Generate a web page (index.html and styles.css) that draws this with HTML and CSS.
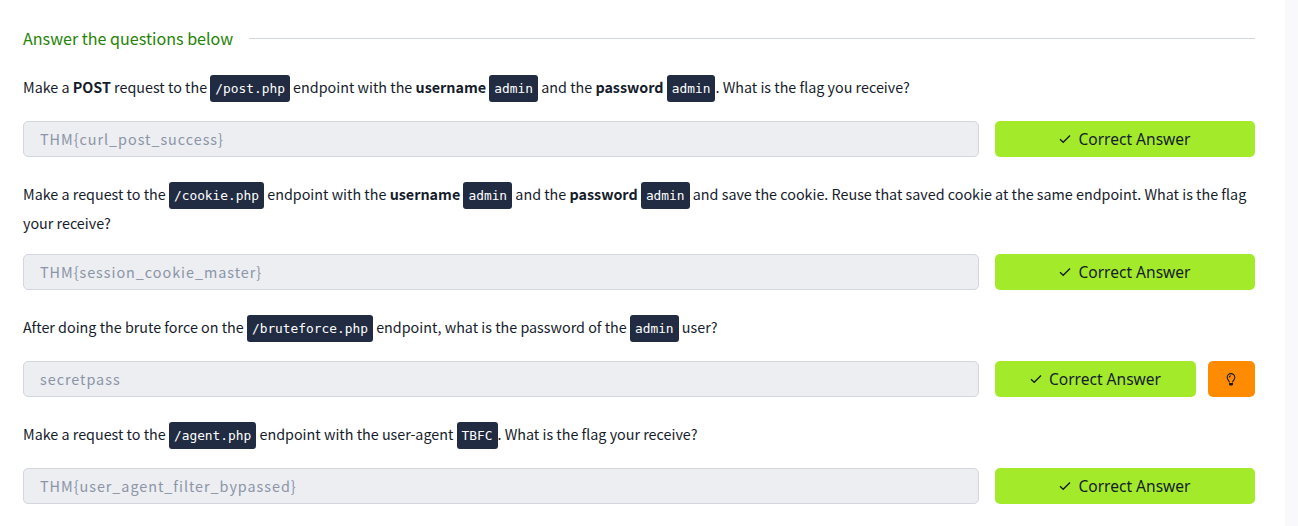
FILE: index.html
```html
<!DOCTYPE html>
<html lang="en">
<head>
  <meta charset="UTF-8">
  <meta name="viewport" content="width=device-width, initial-scale=1.0">
  <title>Answer the questions below</title>
  <link rel="stylesheet" href="styles.css">
</head>
<body>
  <svg class="sprite" aria-hidden="true">
    <symbol id="check" viewBox="0 0 12 10">
      <path d="M1 5.2 4.2 8.3 11 1.5" fill="none" stroke="currentColor" stroke-width="1.3"/>
    </symbol>
    <symbol id="bulb" viewBox="0 0 10 13">
      <path d="M3.5 9.4C3.3 7.6 1.2 6.8 1.2 4.4a3.8 3.8 0 0 1 7.6 0C8.8 6.8 6.7 7.6 6.5 9.4M3.2 4.5A1.9 1.9 0 0 1 5 2.7" fill="none" stroke="currentColor" stroke-width="1.1"/>
      <path d="M3 10h4v1.2L6.3 12.5H3.7L3 11.2z" fill="currentColor"/>
    </symbol>
  </svg>

  <main class="task">
    <div class="task-title">
      <h2>Answer the questions below</h2>
      <span class="line"></span>
    </div>

    <section class="question">
      <p>Make a <strong>POST</strong> request to the <code>/post.php</code> endpoint with the <strong>username</strong> <code>admin</code> and the <strong>password</strong> <code>admin</code>. What is the flag you receive?</p>
      <div class="answer-row">
        <input class="answer" type="text" value="THM{curl_post_success}" disabled>
        <div class="actions">
          <button class="btn correct"><svg class="icon-check"><use href="#check"/></svg><span>Correct Answer</span></button>
        </div>
      </div>
    </section>

    <section class="question">
      <p>Make a request to the <code>/cookie.php</code> endpoint with the <strong>username</strong> <code>admin</code> and the <strong>password</strong> <code>admin</code> and save the cookie. Reuse that saved cookie at the same endpoint. What is the flag your receive?</p>
      <div class="answer-row">
        <input class="answer" type="text" value="THM{session_cookie_master}" disabled>
        <div class="actions">
          <button class="btn correct"><svg class="icon-check"><use href="#check"/></svg><span>Correct Answer</span></button>
        </div>
      </div>
    </section>

    <section class="question">
      <p>After doing the brute force on the <code>/bruteforce.php</code> endpoint, what is the password of the <code>admin</code> user?</p>
      <div class="answer-row">
        <input class="answer" type="text" value="secretpass" disabled>
        <div class="actions">
          <button class="btn correct"><svg class="icon-check"><use href="#check"/></svg><span>Correct Answer</span></button>
          <button class="btn hint" aria-label="Hint"><svg class="icon-bulb"><use href="#bulb"/></svg></button>
        </div>
      </div>
    </section>

    <section class="question">
      <p>Make a request to the <code>/agent.php</code> endpoint with the user-agent <code>TBFC</code>. What is the flag your receive?</p>
      <div class="answer-row">
        <input class="answer" type="text" value="THM{user_agent_filter_bypassed}" disabled>
        <div class="actions">
          <button class="btn correct"><svg class="icon-check"><use href="#check"/></svg><span>Correct Answer</span></button>
        </div>
      </div>
    </section>
  </main>
</body>
</html>
```
FILE: styles.css
```css
:root {
  --text: #151c2b;
  --code-bg: #212c42;
  --border: #d2d6df;
  --green: #a3ea2a;
  --orange: #ff8b00;
  --sans: "Noto Sans CJK JP", "Open Sans", sans-serif;
}

* {
  box-sizing: border-box;
}

body {
  margin: 0;
  background: #f9f9fb;
  color: var(--text);
  font-family: var(--sans);
  overflow: hidden;
}

.sprite {
  display: none;
}

.task {
  width: 1285px;
  height: 526px;
  padding: 25px 30px 0 23px;
  background: #fff;
}

.task-title {
  display: flex;
  align-items: center;
  gap: 16px;
  height: 26px;
}

.task-title h2 {
  margin: 0;
  font-size: 16.1px;
  font-weight: 400;
  line-height: 26px;
  color: #258305;
}

.task-title .line {
  flex: 1;
  height: 1px;
  background: var(--border);
}

.question {
  padding-top: 23px;
}

.question + .question {
  padding-top: 24px;
}

.question p {
  margin: 0 0 18px;
  font-size: 14.33px;
  line-height: 26px;
}

.question code {
  display: inline-block;
  height: 27px;
  margin-bottom: 1px;
  padding: 0 5px;
  border-radius: 3px;
  background: var(--code-bg);
  color: #fff;
  font-family: "DejaVu Sans Mono", monospace;
  font-size: 12.85px;
  line-height: 27px;
}

.answer-row {
  display: flex;
  gap: 16px;
  height: 36px;
}

.answer {
  flex: 1;
  min-width: 0;
  padding: 0 16px 2px;
  border: 1px solid var(--border);
  border-radius: 5px;
  background: #edeef2;
  color: #8b95a7;
  font-family: var(--sans);
  font-size: 14.4px;
  letter-spacing: 0.96px;
}

.actions {
  display: flex;
  gap: 12px;
  width: 260px;
}

.btn {
  display: flex;
  align-items: center;
  justify-content: center;
  padding: 0;
  border: none;
  border-radius: 5px;
  color: var(--text);
  font-family: "Noto Sans", sans-serif;
  font-size: 15.55px;
}

.correct {
  flex: 1;
  gap: 7px;
  background: var(--green);
}

.hint {
  width: 47px;
  padding-right: 1px;
  background: var(--orange);
}

.icon-check {
  width: 12px;
  height: 10px;
}

.icon-bulb {
  width: 10px;
  height: 13px;
}
```
